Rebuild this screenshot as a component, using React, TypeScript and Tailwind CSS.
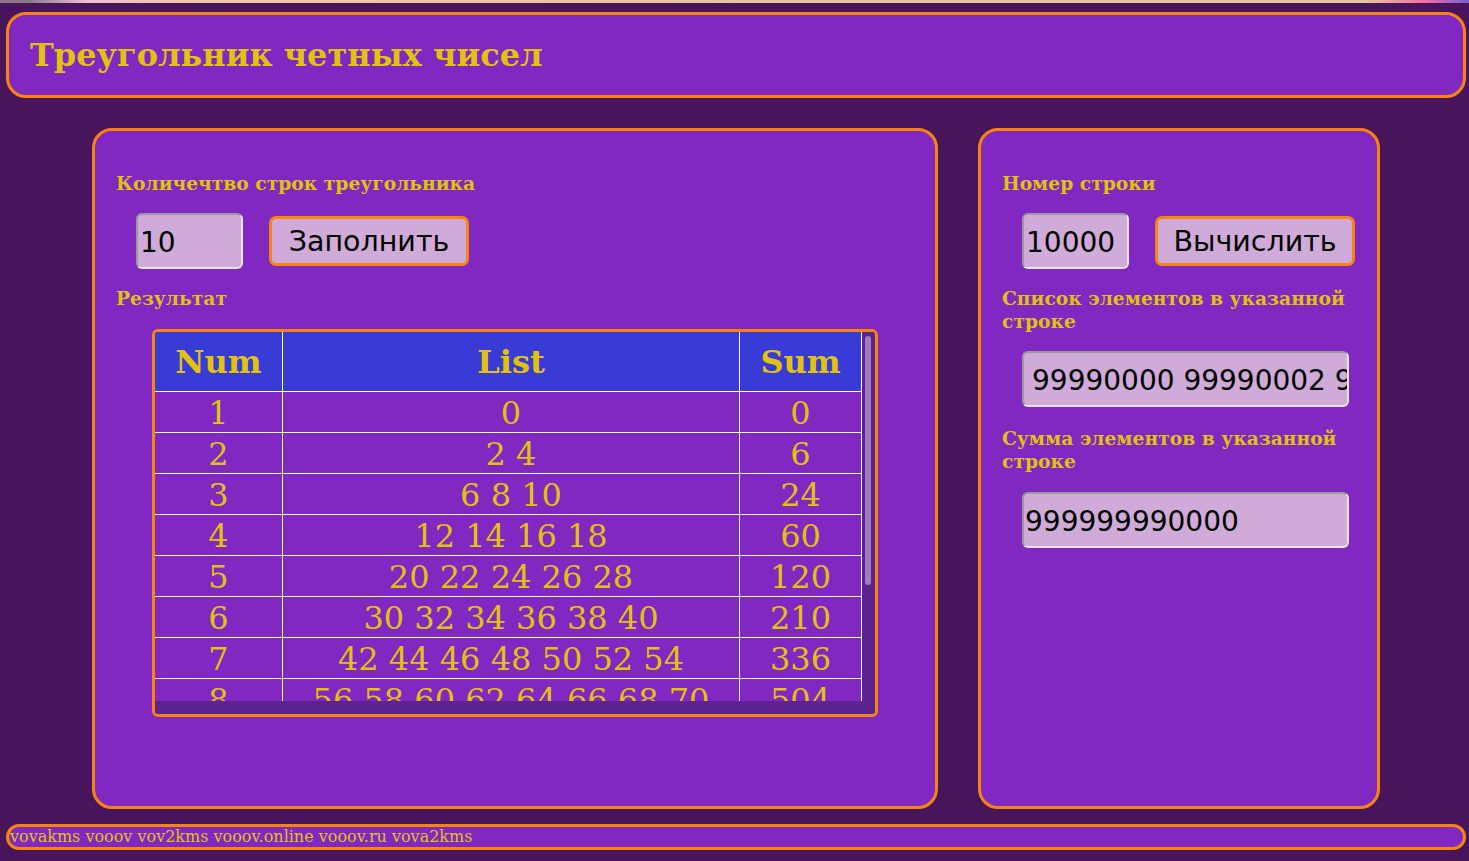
import React from "react";

const serif = "font-['DejaVu_Serif','Liberation_Serif',serif]";
const sans = "font-['DejaVu_Sans','Liberation_Sans',sans-serif]";

const rows: [number, string, number][] = [
  [1, "0", 0],
  [2, "2 4", 6],
  [3, "6 8 10", 24],
  [4, "12 14 16 18", 60],
  [5, "20 22 24 26 28", 120],
  [6, "30 32 34 36 38 40", 210],
  [7, "42 44 46 48 50 52 54", 336],
  [8, "56 58 60 62 64 66 68 70", 504],
];

function Label({ children }: { children: React.ReactNode }) {
  return (
    <div className={`${serif} text-[18.7px] font-bold leading-[23px] text-[#e0c30f]`}>{children}</div>
  );
}

function Field({ value, w, pl = "pl-[2px]" }: { value: string; w: string; pl?: string }) {
  return (
    <div
      className={`${sans} ${w} ${pl} h-[56px] ml-[20px] pt-[3px] flex items-center overflow-hidden whitespace-nowrap rounded-[6px] border-2 border-t-[#9a9a9a] border-l-[#9a9a9a] border-b-[#e6e6e6] border-r-[#e6e6e6] bg-[#d0aad9] text-[28px] text-black`}
    >
      {value}
    </div>
  );
}

function Btn({ children }: { children: React.ReactNode }) {
  return (
    <div
      className={`${sans} h-[50px] w-[200px] pt-[2px] flex items-center justify-center rounded-[7px] border-[3px] border-[#f5850c] bg-[#d0aad9] text-[28.5px] text-black`}
    >
      {children}
    </div>
  );
}

export default function App() {
  return (
    <div className={`${serif} relative w-[1469px] h-[861px] bg-[#48145c] flex flex-col overflow-hidden`}>
      <div className="h-[3px] w-full bg-[linear-gradient(90deg,#8a7a8a_0%,#8a7a8a_2%,#f3c0d8_6%,#f0c8a8_12%,#e9c59f_50%,#e9c59f_93%,#f070a0_97%,#7060d0_100%)]" />
      <div className="pl-[6px] pr-[3px] pt-[9px]">
        <div className="h-[86px] rounded-[20px] border-[3px] border-[#f5850c] bg-[#8127c2] flex items-center pl-[21px]">
          <h1 className="text-[32px] font-bold text-[#e0c30f] leading-none mt-[-1px]">Треугольник четных чисел</h1>
        </div>
      </div>

      <div className="flex gap-[40px] pl-[92px] mt-[30px]">
        {/* left panel */}
        <div className="w-[846px] h-[681px] rounded-[20px] border-[3px] border-[#f5850c] bg-[#8127c2] pl-[21px] pt-[41px]">
          <Label>Количечтво строк треугольника</Label>
          <div className="flex items-center gap-[26px] mt-[18px]">
            <Field value="10" w="w-[107px]" />
            <Btn>Заполнить</Btn>
          </div>
          <div className="mt-[18px]">
            <Label>Результат</Label>
          </div>
          <div className="ml-[36px] mt-[19px] w-[726px] h-[388px] rounded-[6px] border-[3px] border-[#f5850c] bg-[#5d2390] flex flex-col overflow-hidden">
            <div className="flex h-[369px]">
              <div className="w-[707px] h-[369px] overflow-hidden bg-[#8127c2]">
                <div className="flex h-[60px] bg-[#383bd6] border-b border-white text-[32px] font-bold text-[#e0c30f]">
                  <div className="w-[128px] flex items-center justify-center border-r border-white">Num</div>
                  <div className="w-[457px] flex items-center justify-center border-r border-white">List</div>
                  <div className="w-[122px] flex items-center justify-center border-r border-white">Sum</div>
                </div>
                {rows.map(([n, list, sum]) => (
                  <div key={n} className="flex h-[41px] border-b border-white text-[32px] text-[#e0c30f] leading-none">
                    <div className="w-[128px] flex items-center justify-center border-r border-white pt-[1px]">{n}</div>
                    <div className="w-[457px] flex items-center justify-center border-r border-white pt-[1px]">{list}</div>
                    <div className="w-[122px] flex items-center justify-center border-r border-white pt-[1px]">{sum}</div>
                  </div>
                ))}
              </div>
              <div className="w-[12px] h-[369px] bg-[#5d2390] pl-[3px] pt-[4px]">
                <div className="w-[6px] h-[249px] rounded-full bg-[#a07cbf]" />
              </div>
            </div>
            <div className="h-[12px] bg-[#5d2390]" />
          </div>
        </div>

        {/* right panel */}
        <div className="w-[402px] h-[681px] rounded-[20px] border-[3px] border-[#f5850c] bg-[#8127c2] pl-[21px] pr-[20px] pt-[41px]">
          <Label>Номер строки</Label>
          <div className="flex items-center gap-[26px] mt-[18px]">
            <Field value="10000" w="w-[107px]" />
            <Btn>Вычислить</Btn>
          </div>
          <div className="mt-[18px]">
            <Label>Список элементов в указанной строке</Label>
          </div>
          <div className="mt-[18px]">
            <Field value="99990000 99990002 99990004" w="w-[327px]" pl="pl-[8px]" />
          </div>
          <div className="mt-[20px]">
            <Label>Сумма элементов в указанной строке</Label>
          </div>
          <div className="mt-[19px]">
            <Field value="999999990000" w="w-[327px]" pl="pl-[1px]" />
          </div>
        </div>
      </div>

      <div className="pl-[6px] pr-[3px] mt-[15px]">
        <div className="h-[26px] rounded-[14px] border-[3px] border-[#f5850c] bg-[#8127c2] flex items-center pl-[1px]">
          <span className="text-[16px] text-[#e0c30f] leading-none">vovakms vooov vov2kms vooov.online vooov.ru vova2kms</span>
        </div>
      </div>
    </div>
  );
}
